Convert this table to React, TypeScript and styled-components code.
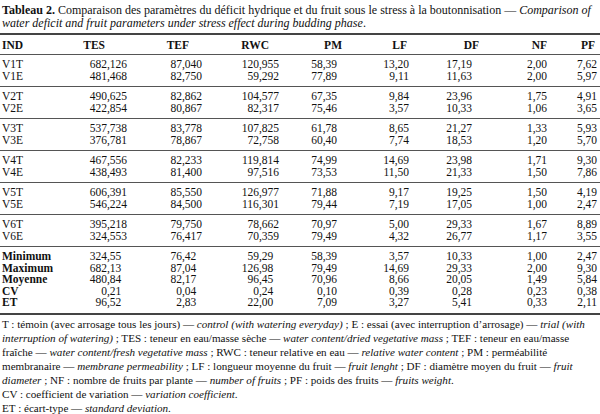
import React from "react";
import styled, { createGlobalStyle } from "styled-components";

const GlobalStyle = createGlobalStyle`
  body {
    margin: 0;
    background: #fff;
    font-family: "Liberation Serif", "Times New Roman", serif;
    color: #111;
  }
`;

const COLS = "60px 65px 75px 77px 58px 72px 63px 75px 50px";

const Page = styled.div`
  width: 600px;
  height: 414px;
  overflow: hidden;
`;

const Caption = styled.div`
  padding: 4px 2px 0;
  font-size: 12px;
  line-height: 12.5px;
  white-space: nowrap;

  & b {
    font-weight: bold;
  }
`;

const Table = styled.div`
  margin-top: 4px;
  border-top: 2px solid #444;
  border-bottom: 2px solid #444;
`;

const HeaderRow = styled.div`
  display: grid;
  grid-template-columns: ${COLS};
  height: 19px;
  align-items: center;
  padding: 0 5px 0 2px;
  font-size: 11.5px;
  font-weight: bold;
  border-bottom: 1px solid #555;
`;

const HeadCell = styled.div<{ $shift: number }>`
  justify-self: end;
  margin-right: ${(p) => p.$shift}px;
`;

const IndHead = styled.div`
  justify-self: start;
`;

const Group = styled.div`
  padding: 4px 0;

  & + & {
    border-top: 1px solid #555;
  }
`;

const Row = styled.div`
  display: grid;
  grid-template-columns: ${COLS};
  padding: 0 5px 0 2px;
  font-size: 11.5px;
  line-height: 11.5px;
`;

const Label = styled.div<{ $bold?: boolean }>`
  font-weight: ${(p) => (p.$bold ? "bold" : "normal")};
  white-space: nowrap;
`;

const Num = styled.div<{ $pad?: boolean }>`
  text-align: right;
  padding-right: ${(p) => (p.$pad ? "0.5em" : "0")};
  white-space: nowrap;
`;

const Notes = styled.div`
  padding: 2px 2px 0;
  font-size: 11.1px;
  line-height: 14px;
  white-space: nowrap;
`;

const headers: [string, number][] = [
  ["TES", 22],
  ["TEF", 13],
  ["RWC", 10],
  ["PM", -5],
  ["LF", 2],
  ["DF", -7],
  ["NF", 0],
  ["PF", 2],
];

const groups: string[][][] = [
  [
    ["V1T", "682,126", "87,040", "120,955", "58,39", "13,20", "17,19", "2,00", "7,62"],
    ["V1E", "481,468", "82,750", "59,292", "77,89", "9,11", "11,63", "2,00", "5,97"],
  ],
  [
    ["V2T", "490,625", "82,862", "104,577", "67,35", "9,84", "23,96", "1,75", "4,91"],
    ["V2E", "422,854", "80,867", "82,317", "75,46", "3,57", "10,33", "1,06", "3,65"],
  ],
  [
    ["V3T", "537,738", "83,778", "107,825", "61,78", "8,65", "21,27", "1,33", "5,93"],
    ["V3E", "376,781", "78,867", "72,758", "60,40", "7,74", "18,53", "1,20", "5,70"],
  ],
  [
    ["V4T", "467,556", "82,233", "119,814", "74,99", "14,69", "23,98", "1,71", "9,30"],
    ["V4E", "438,493", "81,400", "97,516", "73,53", "11,50", "21,33", "1,50", "7,86"],
  ],
  [
    ["V5T", "606,391", "85,550", "126,977", "71,88", "9,17", "19,25", "1,50", "4,19"],
    ["V5E", "546,224", "84,500", "116,301", "79,44", "7,19", "17,05", "1,00", "2,47"],
  ],
  [
    ["V6T", "395,218", "79,750", "78,662", "70,97", "5,00", "29,33", "1,67", "8,89"],
    ["V6E", "324,553", "76,417", "70,359", "79,49", "4,32", "26,77", "1,17", "3,55"],
  ],
];

const stats: string[][] = [
  ["Minimum", "324,55", "76,42", "59,29", "58,39", "3,57", "10,33", "1,00", "2,47"],
  ["Maximum", "682,13", "87,04", "126,98", "79,49", "14,69", "29,33", "2,00", "9,30"],
  ["Moyenne", "480,84", "82,17", "96,45", "70,96", "8,66", "20,05", "1,49", "5,84"],
  ["CV", "0,21", "0,04", "0,24", "0,10", "0,39", "0,28", "0,23", "0,38"],
  ["ET", "96,52", "2,83", "22,00", "7,09", "3,27", "5,41", "0,33", "2,11"],
];

// the three first data columns have 3 decimals above, so the stats keep the comma in line
const DataRow = ({ cells, isStat }: { cells: string[]; isStat?: boolean }) => (
  <Row>
    <Label $bold={isStat}>{cells[0]}</Label>
    {cells.slice(1).map((v, i) => (
      <Num key={i} $pad={isStat && i < 3}>
        {v}
      </Num>
    ))}
  </Row>
);

const App = () => {
  return (
    <>
      <GlobalStyle />
      <Page>
        <Caption>
          <b>Tableau 2.</b> Comparaison des paramètres du déficit hydrique et du fruit sous le
          stress à la boutonnisation — <i>Comparison of</i>
          <br />
          <i>water deficit and fruit parameters under stress effect during budding phase</i>.
        </Caption>
        <Table>
          <HeaderRow>
            <IndHead>IND</IndHead>
            {headers.map(([h, s]) => (
              <HeadCell key={h} $shift={s}>
                {h}
              </HeadCell>
            ))}
          </HeaderRow>
          {groups.map((g, gi) => (
            <Group key={gi}>
              {g.map((r) => (
                <DataRow key={r[0]} cells={r} />
              ))}
            </Group>
          ))}
          <Group>
            {stats.map((r) => (
              <DataRow key={r[0]} cells={r} isStat />
            ))}
          </Group>
        </Table>
        <Notes>
          T : témoin (avec arrosage tous les jours) — <i>control (with watering everyday)</i> ; E :
          essai (avec interruption d’arrosage) — <i>trial (with</i>
          <br />
          <i>interruption of watering)</i> ; TES : teneur en eau/masse sèche —{" "}
          <i>water content/dried vegetative mass</i> ; TEF : teneur en eau/masse
          <br />
          fraîche — <i>water content/fresh vegetative mass</i> ; RWC : teneur relative en eau{" "}
          — <i>relative water content</i> ; PM : perméabilité
          <br />
          membranaire — <i>membrane permeability</i> ; LF : longueur moyenne du fruit —{" "}
          <i>fruit lenght</i> ; DF : diamètre moyen du fruit — <i>fruit</i>
          <br />
          <i>diameter</i> ; NF : nombre de fruits par plante — <i>number of fruits</i> ; PF : poids
          des fruits — <i>fruits weight</i>.
          <br />
          CV : coefficient de variation — <i>variation coefficient</i>.
          <br />
          ET : écart-type — <i>standard deviation</i>.
        </Notes>
      </Page>
    </>
  );
};

export default App;
